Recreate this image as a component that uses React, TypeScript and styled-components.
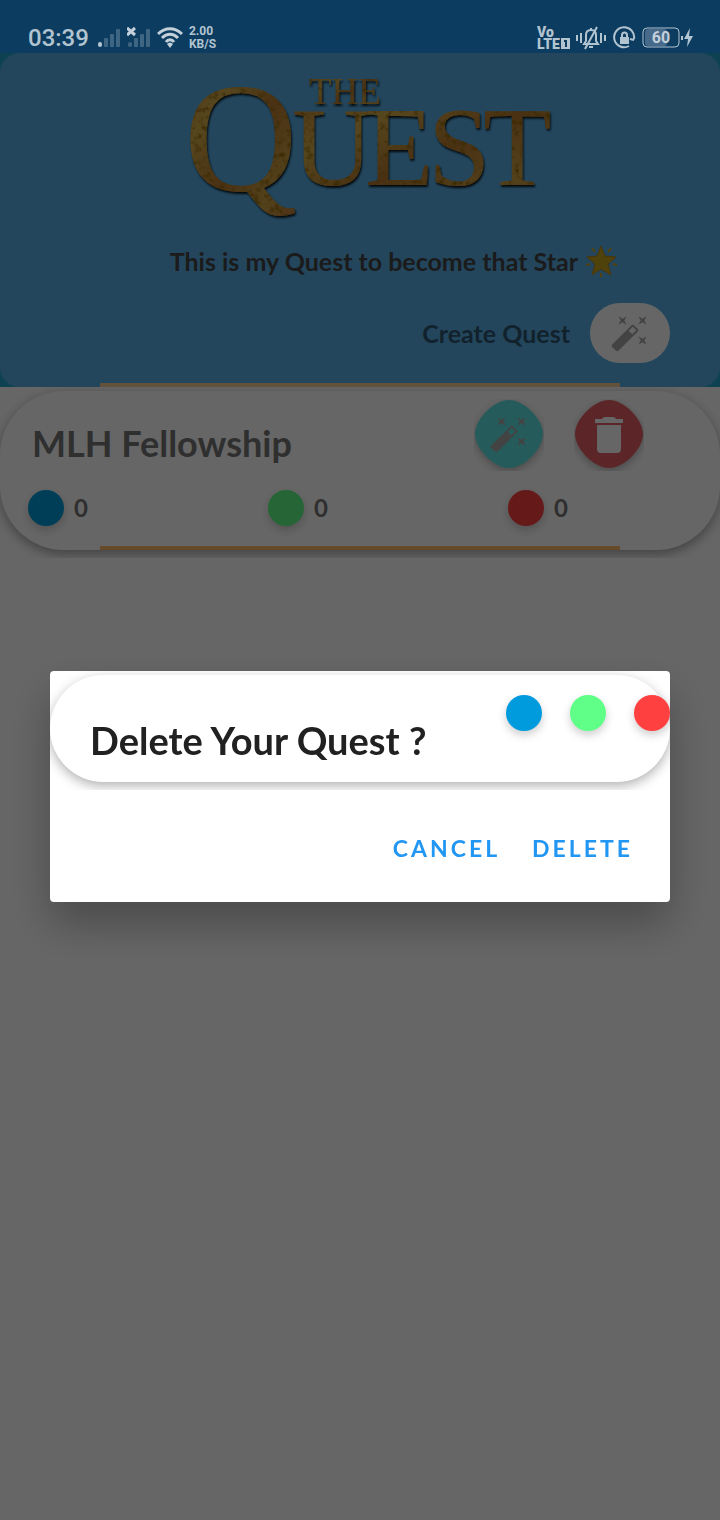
import React from 'react';
import styled, { createGlobalStyle } from 'styled-components';

const hand = `Lato, "Open Sans", sans-serif`;

const Global = createGlobalStyle`
  *, *::before, *::after { box-sizing: border-box; }
  html, body { margin: 0; background: #fff; }
  body { font-family: ${hand}; }
  button { font: inherit; border: 0; padding: 0; background: none; cursor: pointer; }
  h1, h2, p { margin: 0; }
`;

const Page = styled.div`
  min-height: 100vh;
  background: #fff;
`;

const StatusBar = styled.div`
  position: relative;
  z-index: 2;
  display: flex;
  justify-content: space-between;
  align-items: center;
  height: 53px;
  padding: 22px 26px 0 28px;
  background: #0c3c60;
  color: #b3c4d1;
  font-family: Roboto, sans-serif;
`;

const StatusGroup = styled.div`
  display: flex;
  align-items: center;
  gap: 6px;
`;

const Clock = styled.span`
  padding-right: 2px;
  font-size: 24px;
  line-height: 32px;
  font-weight: 500;
`;

const Speed = styled.span`
  font-size: 12px;
  line-height: 13px;
  font-weight: 700;
`;

const Banner = styled.header`
  background: #25a5cc;
`;

const BannerCard = styled.div`
  display: flex;
  flex-direction: column;
  align-items: flex-end;
  border-radius: 20px;
  background: #57b0e9;
  height: 334px;
`;

const Logo = styled.svg`
  display: block;
  align-self: center;
  width: 400px;
  height: 180px;
  overflow: visible;
`;

const Tagline = styled.p`
  display: flex;
  align-items: center;
  gap: 8px;
  height: 56px;
  padding-right: 102px;
  color: #444;
  font-size: 25px;
  line-height: 32px;
  font-weight: 700;
`;

const CreateRow = styled.div`
  display: flex;
  align-items: center;
  gap: 20px;
  margin-top: 14px;
  padding-right: 50px;
  color: #2d5570;
  font-size: 25px;
  font-weight: 700;
`;

const CreateButton = styled.button`
  display: grid;
  place-items: center;
  width: 80px;
  height: 60px;
  border-radius: 30px;
  background: #fff;
`;

const Rule = styled.div<{ $color: string }>`
  align-self: stretch;
  height: 4px;
  margin: auto 100px 0;
  background: ${(p) => p.$color};
`;

const QuestItem = styled.section`
  overflow: hidden;
  padding: 4px 0 8px;
`;

const QuestCard = styled.article`
  display: flex;
  flex-direction: column;
  height: 159px;
  border-radius: 64px;
  background: #fff;
  box-shadow: 0 4px 12px rgba(0, 0, 0, 0.36);
`;

const QuestTop = styled.div`
  display: flex;
  align-items: center;
  justify-content: space-between;
  padding: 8px 76px 0 32px;
`;

const QuestName = styled.h2`
  padding-top: 16px;
  color: #757575;
  font-size: 36px;
  line-height: 48px;
  font-weight: 700;
`;

const Actions = styled.div`
  display: flex;
  gap: 30px;
`;

const ActionButton = styled.button`
  width: 70px;
  height: 72px;
  overflow: hidden;
`;

const ActionArt = styled.svg`
  display: block;
  filter: drop-shadow(0 3px 4px rgba(0, 0, 0, 0.28));
`;

const Counts = styled.div`
  display: grid;
  grid-template-columns: repeat(3, 1fr);
  padding-top: 19px;
`;

const Count = styled.div`
  display: flex;
  align-items: center;
  gap: 10px;
  padding-left: 28px;
  color: #757575;
  font-size: 24px;
  line-height: 36px;
  font-weight: 700;
`;

const Dot = styled.span<{ $color: string }>`
  width: 36px;
  height: 36px;
  border-radius: 50%;
  background: ${(p) => p.$color};
  box-shadow: 0 4px 10px rgba(0, 0, 0, 0.2);
`;

const Scrim = styled.div`
  position: fixed;
  inset: 0;
  z-index: 1;
  display: flex;
  align-items: center;
  padding: 53px 50px 0;
  background: rgba(0, 0, 0, 0.6);
`;

const Dialog = styled.div`
  flex: 1;
  overflow: hidden;
  border-radius: 4px;
  background: #fff;
  box-shadow: 0 22px 44px rgba(0, 0, 0, 0.28);
`;

const DialogTop = styled.div`
  overflow: hidden;
  padding: 4px 0 8px;
`;

const DialogCard = styled.div`
  display: flex;
  justify-content: space-between;
  height: 107px;
  padding-left: 40px;
  border-radius: 54px;
  background: #fff;
  box-shadow: 0 4px 12px rgba(0, 0, 0, 0.3);
`;

const DialogTitle = styled.h1`
  padding-top: 41px;
  color: #212121;
  font-size: 38px;
  line-height: 48px;
  font-weight: 700;
`;

const DialogDots = styled.div`
  display: flex;
  gap: 28px;
  padding-top: 20px;
`;

const DialogActions = styled.div`
  display: flex;
  justify-content: flex-end;
  gap: 32px;
  padding: 42px 37px 38px;
`;

const TextButton = styled.button`
  color: #2196f3;
  font-size: 23px;
  line-height: 32px;
  font-weight: 700;
  letter-spacing: 3px;
`;

const blue = '#009bdd';
const green = '#5fff88';
const red = '#ff4040';

const wandPath =
  'M7.5 5.6L10 7 8.6 4.5 10 2 7.5 3.4 5 2l1.4 2.5L5 7zm12 9.8L17 14l1.4 2.5L17 19l2.5-1.4L22 19l-1.4-2.5L22 14zM22 2l-2.5 1.4L17 2l1.4 2.5L17 7l2.5-1.4L22 7l-1.4-2.5zm-7.63 5.29c-.39-.39-1.02-.39-1.41 0L1.29 18.96c-.39.39-.39 1.02 0 1.41l2.34 2.34c.39.39 1.02.39 1.41 0L16.7 11.05c.39-.39.39-1.02 0-1.41l-2.33-2.35zm-1.03 5.49l-2.12-2.12 2.44-2.44 2.12 2.12-2.44 2.44z';

const diamond = 'M35 1C50 1 69 20 69 35C69 50 50 69 35 69C20 69 1 50 1 35C1 20 20 1 35 1Z';

function QuestLogo() {
  return (
    <Logo viewBox="160 0 400 180" role="img" aria-label="The Quest">
      <defs>
        <linearGradient id="gold" x1="0" y1="0" x2="1" y2="1">
          <stop offset="0" stopColor="#c27c34" />
          <stop offset=".3" stopColor="#d8b04a" />
          <stop offset=".55" stopColor="#b87a30" />
          <stop offset=".8" stopColor="#d0a446" />
          <stop offset="1" stopColor="#bc7434" />
        </linearGradient>
        <filter id="worn" x="-5%" y="-10%" width="110%" height="120%">
          <feTurbulence type="fractalNoise" baseFrequency=".15" numOctaves="3" seed="4" result="n" />
          <feColorMatrix in="n" values="0 0 0 0 .3  0 0 0 0 .15  0 0 0 0 0  0 3 0 0 -1.5" result="spots" />
          <feComposite in="spots" in2="SourceAlpha" operator="in" result="wear" />
          <feDropShadow in="SourceGraphic" dx="1" dy="2" stdDeviation="1" floodColor="#000" floodOpacity=".9" result="base" />
          <feMerge>
            <feMergeNode in="base" />
            <feMergeNode in="wear" />
          </feMerge>
        </filter>
      </defs>
      <g fill="url(#gold)" fontFamily="Liberation Serif, serif" filter="url(#worn)">
        <text x="309" y="51" fontSize="37">THE</text>
        <text x="184" y="137" fontSize="157">Q</text>
        <text y="132" fontSize="112">
          <tspan x="292">U</tspan>
          <tspan x="365">E</tspan>
          <tspan x="428">S</tspan>
          <tspan x="483">T</tspan>
        </text>
      </g>
    </Logo>
  );
}

function Star() {
  return (
    <svg width="32" height="34" viewBox="0 0 32 34" aria-hidden="true">
      <path d="M15 2l4 10 11 1-8 7 3 11-10-6-9 6 3-11-8-7 10-1z" fill="#c9a51c" stroke="#b5831c" strokeWidth="1" />
      <path d="M6 4l3 4M25 4l-3 4M0 21l4-1M31 21l-4-1M15 29v4" stroke="#d0a41c" strokeWidth="2" />
    </svg>
  );
}

function Signal({ none }: { none?: boolean }) {
  return (
    <svg width="24" height="24" viewBox="0 0 24 24" aria-hidden="true">
      <g fill="#b3c4d1">
        <rect x="1" y="16" width="4" height="5" rx="2" opacity={none ? 0.3 : 1} />
        <g opacity=".3">
          <rect x="7" y="12" width="4" height="9" rx="1" />
          <rect x="13" y="8" width="4" height="13" rx="1" />
          <rect x="19" y="3" width="4" height="18" rx="1" />
        </g>
      </g>
      {none && <path d="M0 2l8 7M8 2L0 9" stroke="#c3d0da" strokeWidth="3" />}
    </svg>
  );
}

export default function App() {
  return (
    <Page>
      <Global />
      <StatusBar>
        <StatusGroup>
          <Clock>03:39</Clock>
          <Signal />
          <Signal none />
          <svg width="26" height="22" viewBox="0 0 26 22" fill="none" stroke="#c3d0da" strokeWidth="3" aria-hidden="true">
            <path d="M1 7C8 0 18 0 25 7M5 11c5-5 11-5 16 0M9 15c2-3 6-3 8 0" />
            <path d="M10 17l3 4 3-4c-2-2-4-2-6 0z" fill="#c3d0da" stroke="none" />
          </svg>
          <Speed>2.00<br />KB/S</Speed>
        </StatusGroup>
        <StatusGroup>
          <svg width="33" height="26" viewBox="0 0 33 26" aria-hidden="true" fill="#b3c4d1" fontFamily="Roboto, sans-serif" fontWeight="900">
            <text x="0" y="12" fontSize="14">Vo</text>
            <text x="0" y="24" fontSize="14">LTE</text>
            <rect x="24" y="13" width="9" height="11" />
            <path d="M27 16h2v6" fill="none" stroke="#0c3c60" strokeWidth="2" />
          </svg>
          <svg width="30" height="24" viewBox="0 0 30 24" aria-hidden="true" fill="none" stroke="#b3c4d1" strokeWidth="2">
            <path d="M1 9v6M5 7v10M25 7v10M29 9v6M8 18h14l-2-3V9c0-3-2-5-5-5s-5 2-5 5v6zM15 2v2M13 21h4M21 1L9 23" />
          </svg>
          <svg width="24" height="24" viewBox="0 0 24 24" aria-hidden="true">
            <path d="M17 20A10 10 0 1 1 22 13M22 14l-4-1" fill="none" stroke="#b3c4d1" strokeWidth="2" />
            <path d="M8 11h9v7H8z" fill="#b3c4d1" />
            <path d="M10 11V9a2 2 0 0 1 5 0v2" fill="none" stroke="#b3c4d1" strokeWidth="2" />
          </svg>
          <svg width="52" height="22" viewBox="0 0 52 22" aria-hidden="true">
            <rect x="3" y="2" width="22" height="17" rx="3" fill="#47698a" />
            <rect x="1" y="1" width="36" height="19" rx="4" fill="none" stroke="#b3c4d1" strokeWidth="1" />
            <path d="M39 9h2v4h-2zM48 1l-6 11h4l-1 8 6-11h-4z" fill="#b3c4d1" />
            <text x="19" y="16" textAnchor="middle" fontSize="16" fontWeight="700" fontFamily="Roboto, sans-serif" fill="#c3d0da">60</text>
          </svg>
        </StatusGroup>
      </StatusBar>

      <Banner>
        <BannerCard>
          <QuestLogo />
          <Tagline>This is my Quest to become that Star <Star /></Tagline>
          <CreateRow>
            <label htmlFor="create">Create Quest</label>
            <CreateButton id="create">
              <svg width="40" height="40" viewBox="0 0 24 24" fill="#a8a8a8" aria-hidden="true"><path d={wandPath} /></svg>
            </CreateButton>
          </CreateRow>
          <Rule $color="#f2cf94" />
        </BannerCard>
      </Banner>

      <main>
        <QuestItem>
          <QuestCard>
            <QuestTop>
              <QuestName>MLH Fellowship</QuestName>
              <Actions>
                <ActionButton aria-label="Edit quest">
                  <ActionArt width="70" height="72" viewBox="0 0 70 72">
                    <path d={diamond} fill="#5ce4e4" />
                    <svg x="15" y="15" width="40" height="40" viewBox="0 0 24 24" fill="#a8a8a8"><path d={wandPath} /></svg>
                  </ActionArt>
                </ActionButton>
                <ActionButton aria-label="Delete quest">
                  <ActionArt width="70" height="72" viewBox="0 0 70 72">
                    <path d={diamond} fill="#e66064" />
                    <path d="M21 20h7q1-2 3-2h8q2 0 3 2h7v4H21zM23 26h24v24q0 4-4 4H27q-4 0-4-4z" fill="#fff" />
                  </ActionArt>
                </ActionButton>
              </Actions>
            </QuestTop>
            <Counts>
              <Count><Dot $color={blue} />0</Count>
              <Count><Dot $color={green} />0</Count>
              <Count><Dot $color={red} />0</Count>
            </Counts>
            <Rule $color="#ffbb6a" />
          </QuestCard>
        </QuestItem>
      </main>

      <Scrim>
        <Dialog role="dialog" aria-modal="true" aria-labelledby="dialog-title">
          <DialogTop>
            <DialogCard>
              <DialogTitle id="dialog-title">Delete Your Quest ?</DialogTitle>
              <DialogDots>
                <Dot $color={blue} />
                <Dot $color={green} />
                <Dot $color={red} />
              </DialogDots>
            </DialogCard>
          </DialogTop>
          <DialogActions>
            <TextButton>CANCEL</TextButton>
            <TextButton>DELETE</TextButton>
          </DialogActions>
        </Dialog>
      </Scrim>
    </Page>
  );
}
